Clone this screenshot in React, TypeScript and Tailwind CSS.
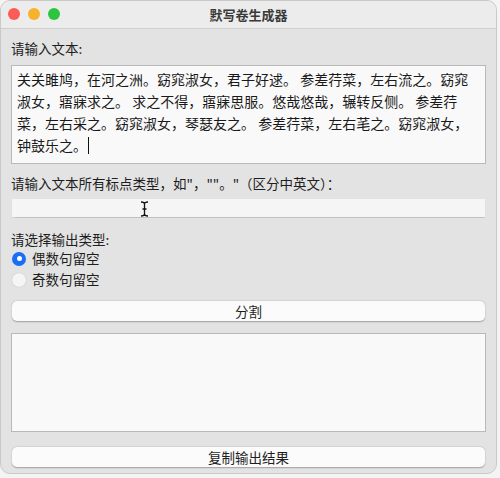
import React from "react";

const cjk = { fontFamily: '"PingFang SC", "Noto Sans CJK SC", "Noto Sans", sans-serif' };

const lines = [
  "关关雎鸠，在河之洲。窈窕淑女，君子好逑。 参差荇菜，左右流之。窈窕",
  "淑女，寤寐求之。 求之不得，寤寐思服。悠哉悠哉，辗转反侧。 参差荇",
  "菜，左右采之。窈窕淑女，琴瑟友之。 参差荇菜，左右芼之。窈窕淑女，",
  "钟鼓乐之。",
];

const IBeam = () => (
  <svg width="9" height="16" viewBox="0 0 9 16" className="absolute left-[128px] top-[2px]">
    <path d="M1 1 Q4.5 1 4.5 3 Q4.5 1 8 1 M4.5 3 V13 M1 15 Q4.5 15 4.5 13 Q4.5 15 8 15 M2.5 8 H6.5" stroke="#111" strokeWidth="1.3" fill="none" />
  </svg>
);

const App = () => {
  return (
    <div className="w-[500px] h-[478px] bg-[#f4f4f4]" style={cjk}>
      <div className="w-[497px] h-[474px] rounded-[10px] bg-[#e3e3e3] border border-[#c9c9c9] overflow-hidden flex flex-col">
        <div className="h-[28px] shrink-0 bg-[#ececec] border-b border-[#cfcfcf] relative flex items-center justify-center">
          <div className="absolute left-[7px] top-[7px] flex gap-[8px]">
            <span className="w-[12px] h-[12px] rounded-full bg-[#fd5b55]" />
            <span className="w-[12px] h-[12px] rounded-full bg-[#f6b22a]" />
            <span className="w-[12px] h-[12px] rounded-full bg-[#2dc43f]" />
          </div>
          <span className="text-[13px] font-bold text-[#3a3a3a]">默写卷生成器</span>
        </div>

        <div className="flex flex-col px-[10px]">
          <div className="mt-[10px] text-[13.5px] text-[#1e1e1e] leading-[18px]">请输入文本:</div>
          <div className="mt-[8px] h-[99px] bg-[#f9f9f9] border border-[#b9b9b9] px-[5px] pt-[2px] text-[14px] leading-[22px] text-[#1a1a1a] whitespace-pre">
            {lines.map((l, i) => (
              <div key={i} className="flex items-center">
                <span>{l}</span>
                {i === 3 && <span className="ml-[1px] w-[1px] h-[17px] bg-[#111]" />}
              </div>
            ))}
          </div>

          <div className="mt-[10px] text-[13.5px] text-[#1e1e1e] leading-[18px]">
            请输入文本所有标点类型，如"，""。"（区分中英文）：
          </div>
          <div className="mt-[7px] mx-[1px] h-[18px] bg-[#f5f5f5] shadow-[0_0.5px_1px_rgba(0,0,0,0.15)] relative">
            <IBeam />
          </div>

          <div className="mt-[13px] text-[13.5px] text-[#1e1e1e] leading-[18px]">请选择输出类型:</div>
          <div className="flex items-center gap-[6px] h-[21px] pl-[1px]">
            <span className="w-[14px] h-[14px] rounded-full bg-[#1a6ef5] flex items-center justify-center">
              <span className="w-[5px] h-[5px] rounded-full bg-white" />
            </span>
            <span className="text-[13.5px] text-[#1e1e1e]">偶数句留空</span>
          </div>
          <div className="flex items-center gap-[6px] h-[21px] pl-[1px]">
            <span className="w-[14px] h-[14px] rounded-full bg-[#f5f5f5] shadow-[0_0_1px_rgba(0,0,0,0.25)]" />
            <span className="text-[13.5px] text-[#1e1e1e]">奇数句留空</span>
          </div>

          <button className="mt-[11px] mx-[1px] h-[20px] rounded-[5px] bg-[#fbfbfb] shadow-[0_0.5px_1.5px_rgba(0,0,0,0.3)] text-[13.5px] text-[#1e1e1e] leading-[20px]">
            分割
          </button>

          <div className="mt-[12px] h-[99px] bg-[#f9f9f9] border border-[#b9b9b9]" />

          <button className="mt-[15px] mx-[1px] h-[20px] rounded-[5px] bg-[#fbfbfb] shadow-[0_0.5px_1.5px_rgba(0,0,0,0.3)] text-[13.5px] text-[#1e1e1e] leading-[20px]">
            复制输出结果
          </button>
        </div>
      </div>
    </div>
  );
};

export default App;
